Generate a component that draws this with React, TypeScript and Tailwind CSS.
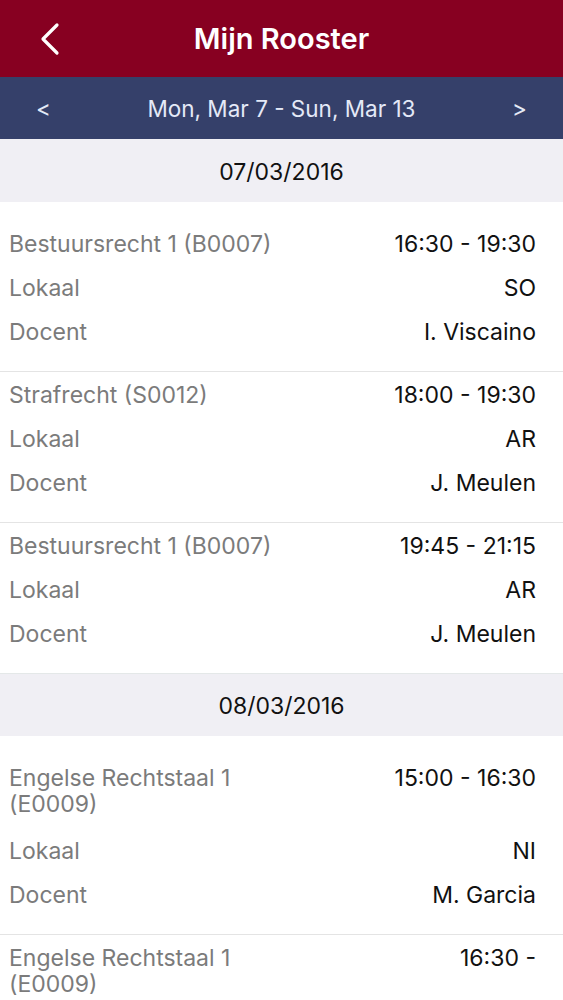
import React from "react"

type Lesson = {
  title: string
  time: string
  lokaal: string
  docent: string
  twoLine?: boolean
}

const days: { date: string; lessons: Lesson[] }[] = [
  {
    date: "07/03/2016",
    lessons: [
      { title: "Bestuursrecht 1 (B0007)", time: "16:30 - 19:30", lokaal: "SO", docent: "I. Viscaino" },
      { title: "Strafrecht (S0012)", time: "18:00 - 19:30", lokaal: "AR", docent: "J. Meulen" },
      { title: "Bestuursrecht 1 (B0007)", time: "19:45 - 21:15", lokaal: "AR", docent: "J. Meulen" },
    ],
  },
  {
    date: "08/03/2016",
    lessons: [
      { title: "Engelse Rechtstaal 1 (E0009)", time: "15:00 - 16:30", lokaal: "NI", docent: "M. Garcia", twoLine: true },
      { title: "Engelse Rechtstaal 1 (E0009)", time: "16:30 -", lokaal: "NI", docent: "M. Garcia", twoLine: true },
    ],
  },
]

function Row({ label, value, tall }: { label: string; value: string; tall?: boolean }) {
  return (
    <div className={(tall ? "pt-[9px] pb-[12px] " : "py-[9px] ") + "flex justify-between items-start pl-[9px] pr-[27px] leading-[26px]"}>
      <span className="text-[#7b7b7b] max-w-[280px]">{label}</span>
      <span className="text-[#111] text-right whitespace-nowrap">{value}</span>
    </div>
  )
}

export default function App() {
  return (
    <div className="w-[563px] h-[1000px] overflow-hidden bg-white text-[23px]" style={{ fontFamily: "Inter, 'Open Sans', sans-serif" }}>
      {/* Nav bar */}
      <div className="relative h-[77px] bg-[#870021] flex items-center justify-center">
        <svg className="absolute left-[38px] top-[22px]" width="24" height="34" viewBox="0 0 24 34" fill="none">
          <path d="M19 3 L5 17 L19 31" stroke="white" strokeWidth="3.2" strokeLinecap="round" strokeLinejoin="round" />
        </svg>
        <h1 className="text-white text-[29px] font-semibold">Mijn Rooster</h1>
      </div>

      {/* Week switcher */}
      <div className="h-[62px] pt-[2px] bg-[#35406a] flex items-center justify-between px-[36px] text-[#e4e9f7] text-[22.5px]">
        <span>&lt;</span>
        <span>Mon, Mar 7 - Sun, Mar 13</span>
        <span>&gt;</span>
      </div>

      {days.map((day, di) => (
        <div key={day.date}>
          <div className={(di > 0 ? "border-t border-[#e4e8e8] " : "") + "h-[63px] pt-[3px] bg-[#f0eff4] flex items-center justify-center text-[#111]"}>
            {day.date}
          </div>
          <div className="pt-[20px]">
            {day.lessons.map((l, i) => (
              <div key={i} className={(i > 0 ? "border-t border-[#e4e4e4] pt-[1px] " : "") + "pb-[17px]"}>
                <Row label={l.title} value={l.time} tall={l.twoLine} />
                <Row label="Lokaal" value={l.lokaal} />
                <Row label="Docent" value={l.docent} />
              </div>
            ))}
          </div>
        </div>
      ))}
    </div>
  )
}
